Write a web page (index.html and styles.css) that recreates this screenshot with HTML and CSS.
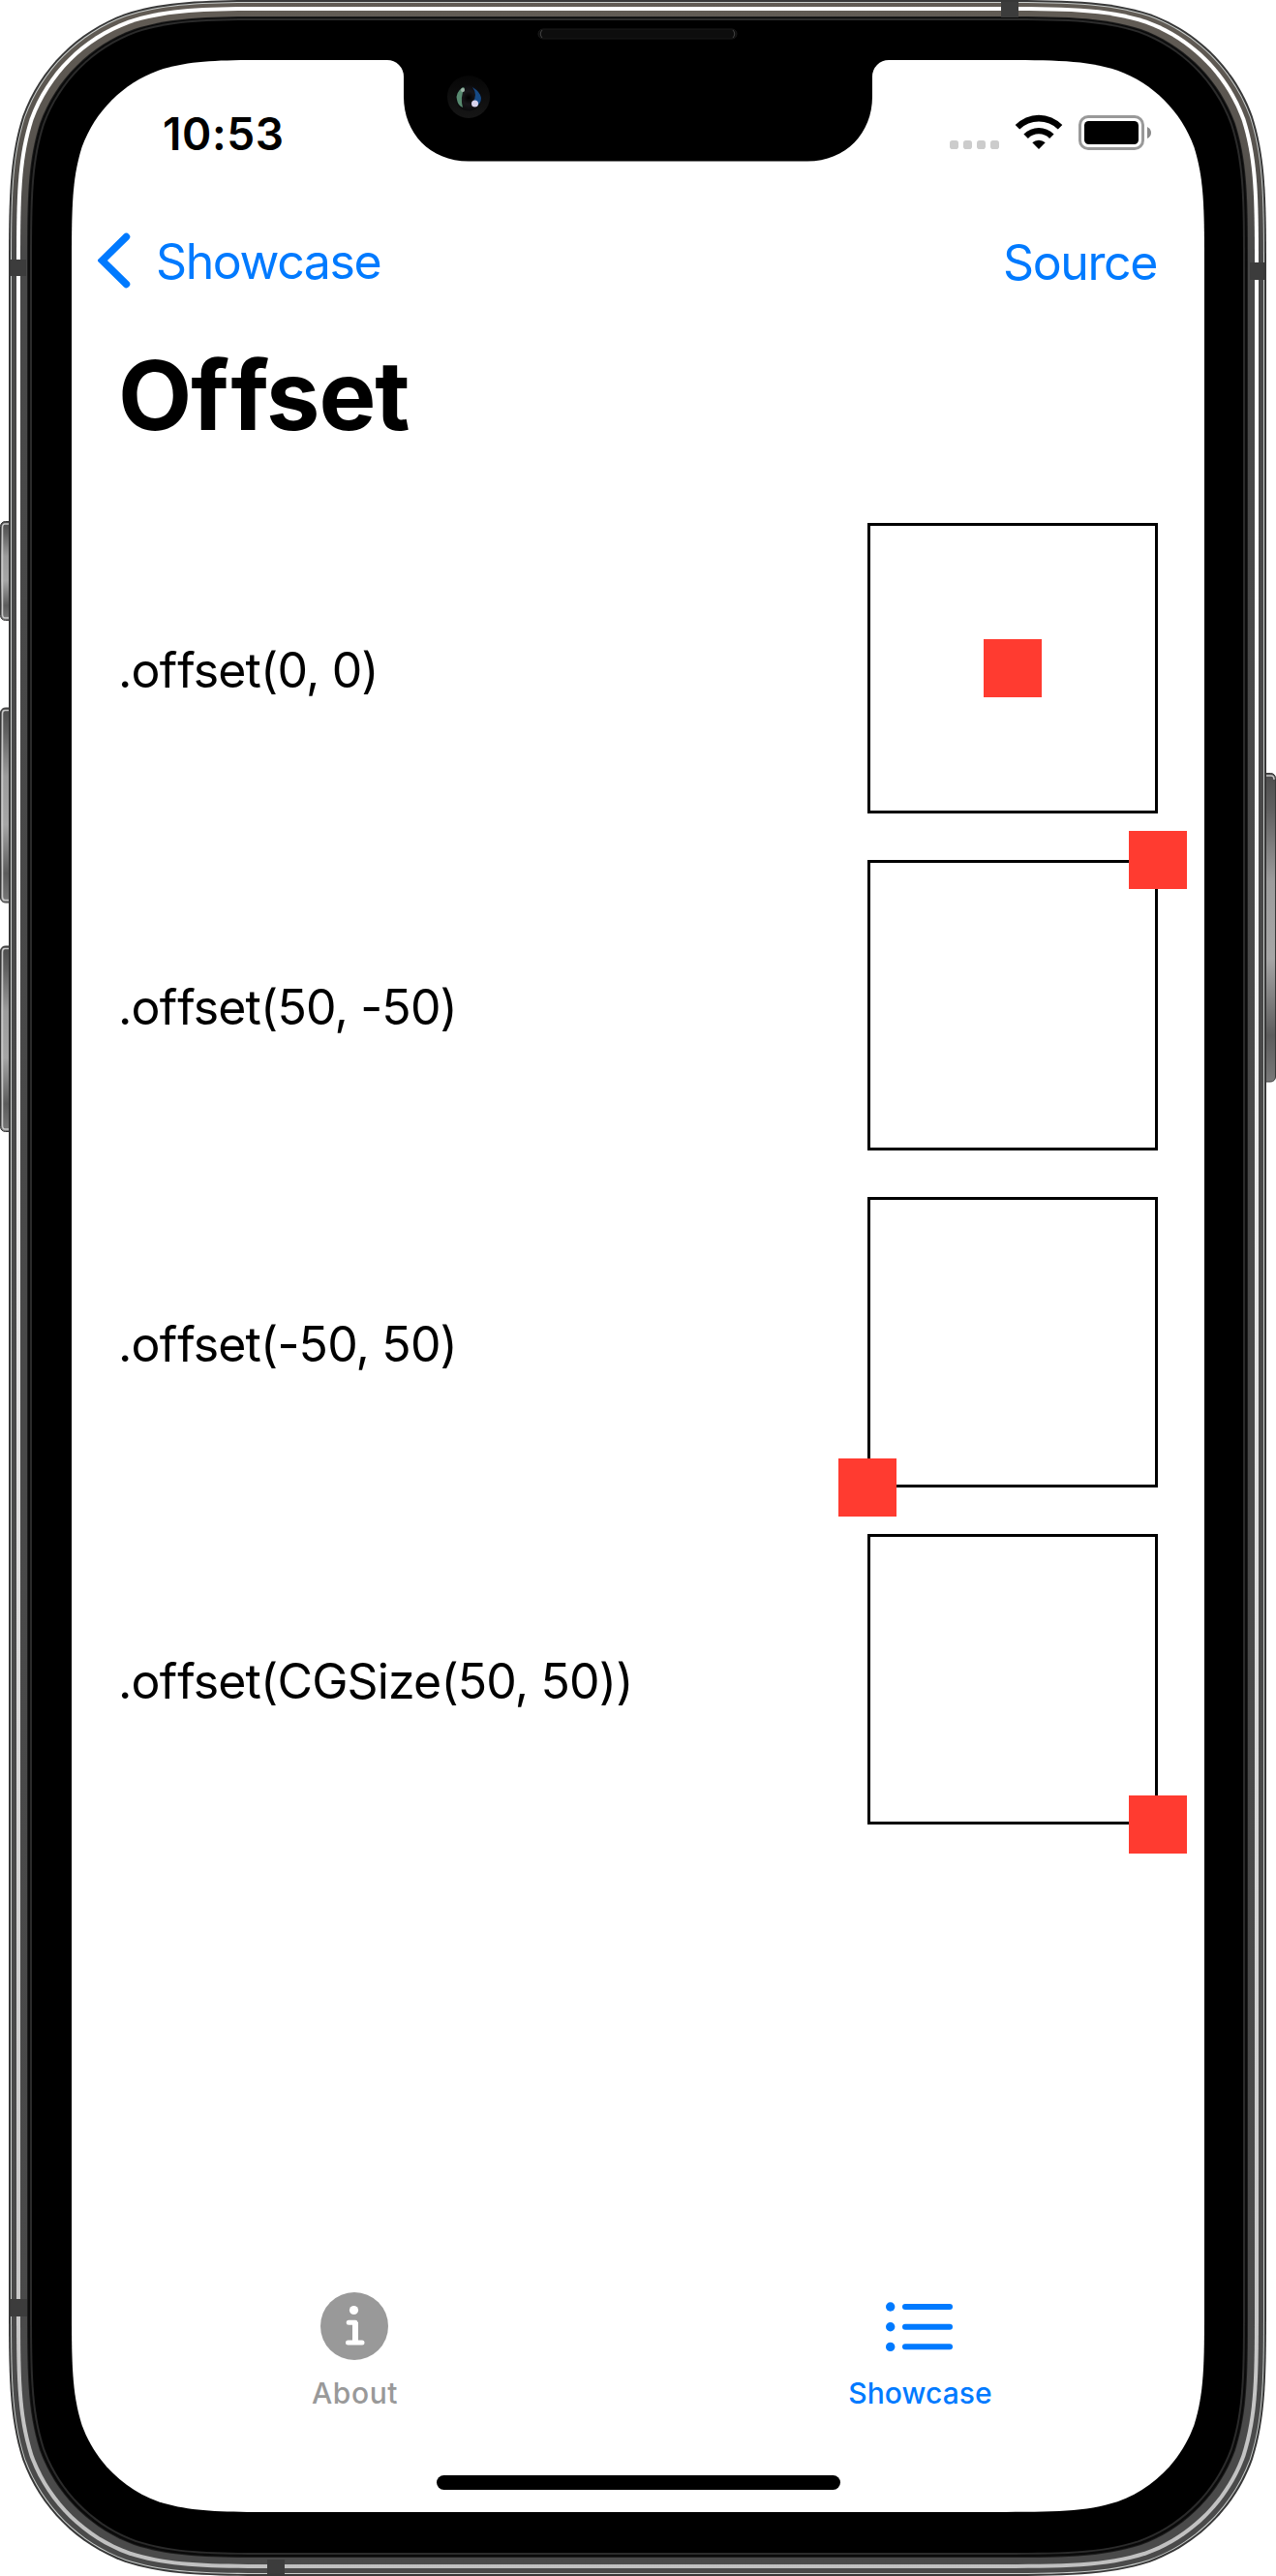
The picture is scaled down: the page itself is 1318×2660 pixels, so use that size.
FILE: index.html
```html
<!DOCTYPE html>
<html lang="en">
<head>
<meta charset="utf-8">
<title>Offset</title>
<link rel="stylesheet" href="styles.css">
</head>
<body>
<div class="device">
  <svg class="frame" viewBox="0 0 1318 2660" aria-hidden="true">
    <defs>
      <linearGradient id="metal" gradientUnits="userSpaceOnUse" x1="0" y1="0" x2="0" y2="2660">
        <stop offset="0" stop-color="#625c55"/><stop offset=".06" stop-color="#57534e"/><stop offset=".1" stop-color="#484848"/><stop offset="1" stop-color="#4a4a4a"/>
      </linearGradient>
      <linearGradient id="shine" gradientUnits="userSpaceOnUse" x1="0" y1="0" x2="0" y2="2660">
        <stop offset="0" stop-color="#fff"/><stop offset=".2" stop-color="#fff"/><stop offset=".5" stop-color="#e6e6e6"/><stop offset="1" stop-color="#c0c0c0"/>
      </linearGradient>
      <linearGradient id="key" x1="0" y1="0" x2="0" y2="1">
        <stop offset="0" stop-color="#4c4c4c"/><stop offset=".12" stop-color="#606060"/><stop offset=".35" stop-color="#9c9c9c"/><stop offset=".6" stop-color="#a6a6a6"/><stop offset=".85" stop-color="#5c5c5c"/><stop offset="1" stop-color="#787878"/>
      </linearGradient>
      <radialGradient id="lens"><stop offset="0" stop-color="#000"/><stop offset=".5" stop-color="#17151a"/><stop offset="1" stop-color="#0a0a0c"/></radialGradient>
      <linearGradient id="well" x1="0" y1="0" x2="0" y2="1"><stop offset="0" stop-color="#060606"/><stop offset="1" stop-color="#161616"/></linearGradient>
    </defs>
    <g class="keys">
      <rect x=".5" y="538.5" width="16" height="102" rx="5"/>
      <rect x=".5" y="731" width="16" height="201" rx="5"/>
      <rect x=".5" y="977" width="16" height="191.500" rx="5"/>
      <rect x="1300" y="798.5" width="17.5" height="318.5" rx="5"/>
    </g>
    <path class="key-edge" d="M9 541H5Q2.500 541 2.500 545V634Q2.500 638 5 638H9M9 733.500H5Q2.500 733.500 2.500 737V926Q2.500 929.500 5 929.500H9M9 979.500H5Q2.500 979.500 2.500 983V1162Q2.500 1166 5 1166H9M1308 801H1313Q1316 801 1316 805"/>
    <g id="rings"></g>
    <g class="antenna">
      <rect x="11" y="268" width="16" height="17"/>
      <rect x="1291" y="271" width="15" height="18"/>
      <rect x="1034" y="2" width="18" height="16"/>
      <rect x="11" y="2374" width="17" height="18"/>
      <rect x="276" y="2643" width="18" height="15"/>
    </g>
    <path id="glass" fill="#fff"/>
    <path d="M400 61V62A17 17 0 0 1 417 79V100C417 137 444 166.500 484 166.500H834C874 166.500 901 137 901 100V79A17 17 0 0 1 918 62V61Z"/>
    <rect x="556" y="30" width="205" height="10" rx="5" fill="#0d0d0d" stroke="#1b1b1b"/>
    <path d="M560 31Q556.500 35 560 39M757 31Q760.500 35 757 39" fill="none" stroke="#444"/>
    <circle cx="484" cy="100" r="22" fill="url(#well)"/>
    <circle cx="484" cy="101" r="13.500" fill="url(#lens)"/>
    <path d="M478 90Q470 96 472 103Q473 109 478 111Q475 100 480 91Z" fill="#588a70"/>
    <path d="M488 90Q496 95 497 101Q497 107 492 110L488 106Q494 98 488 90Z" fill="#164a86"/>
    <circle cx="478" cy="93" r="2" fill="#9db5a8"/>
    <circle cx="490.500" cy="107" r="3.500" fill="#d8d3ec"/>
  </svg>

  <main class="screen">
    <header class="status">
      <time class="clock">10:53</time>
      <svg class="indicators" width="210" height="38" viewBox="0 0 210 38" aria-hidden="true">
        <g fill="#ccc"><rect x="0" y="27" width="9" height="9" rx="2.800"/><rect x="14" y="27" width="9" height="9" rx="2.800"/><rect x="28" y="27" width="9" height="9" rx="2.800"/><rect x="42" y="27" width="9" height="9" rx="2.800"/></g>
        <path d="M92 36L85.300 29.300A10.200 10.200 0 0 1 98.700 29.300Z"/>
        <path d="M76.400 20.400L80.900 24.900A15.700 15.700 0 0 1 103.100 24.900L107.600 20.400A22.500 22.500 0 0 0 76.400 20.400Z"/>
        <path d="M67.700 11.100L72.200 15.600A28.200 28.200 0 0 1 111.800 15.600L116.300 11.100A33.500 33.500 0 0 0 67.700 11.100Z"/>
        <rect x="134.500" y="2.500" width="65" height="33" rx="8.500" fill="none" stroke="#999" stroke-width="3"/>
        <rect x="139" y="7" width="56" height="24" rx="4.500"/>
        <path d="M204 13Q208 15 208 19T204 25Z" fill="#8a8a8a"/>
      </svg>
    </header>

    <nav class="navbar">
      <a class="back">
        <svg width="34" height="58" viewBox="0 0 34 58" aria-hidden="true"><path d="M29.500 4.500L4.500 29L29.500 53.500" fill="none" stroke="#007aff" stroke-width="7.500" stroke-linecap="round" stroke-linejoin="miter"/></svg>
        <span>Showcase</span>
      </a>
      <a class="source">Source</a>
    </nav>

    <h1 class="title">O<b>f</b>fset</h1>

    <section class="samples">
      <div class="sample"><span>.o<b>f</b>fset(0, 0)</span><div class="box"><i class="dot"></i></div></div>
      <div class="sample"><span>.o<b>f</b>fset(50, -50)</span><div class="box"><i class="dot up-right"></i></div></div>
      <div class="sample"><span>.o<b>f</b>fset(-50, 50)</span><div class="box"><i class="dot down-left"></i></div></div>
      <div class="sample"><span>.o<b>f</b>fset(CGSize(50, 50))</span><div class="box"><i class="dot down-right"></i></div></div>
    </section>

    <footer class="tabs">
      <a class="tab">
        <svg width="70" height="70" viewBox="0 0 70 70" aria-hidden="true"><circle cx="35" cy="35" r="35" fill="#999"/><circle cx="34.500" cy="18.500" r="4.600" fill="#fff"/><path d="M29.200 31.200H36V52M28.500 52H43" fill="none" stroke="#fff" stroke-width="5" stroke-linecap="round" stroke-linejoin="round"/><path d="M36 31V52" fill="none" stroke="#fff" stroke-width="6"/></svg>
        <span>About</span>
      </a>
      <a class="tab active">
        <svg width="70" height="70" viewBox="0 0 70 70" aria-hidden="true"><g fill="#007aff"><circle cx="4.700" cy="15" r="4.700"/><circle cx="4.700" cy="35.700" r="4.700"/><circle cx="4.700" cy="56.400" r="4.700"/><rect x="17" y="12" width="52" height="6" rx="3"/><rect x="17" y="32.700" width="52" height="6" rx="3"/><rect x="17" y="53.300" width="52" height="6" rx="3"/></g></svg>
        <span>Showcase</span>
      </a>
    </footer>
    <div class="home"></div>
  </main>
</div>
<script src="frame.js"></script>
</body>
</html>
```
FILE: styles.css
```css
* { box-sizing: border-box; }
body { margin: 0; background: #fff; font-family: Inter, "Liberation Sans", sans-serif; font-variant-ligatures: none; color: #000; }
.device { position: relative; width: 1318px; height: 2660px; padding: 62px 74px 66px; overflow: hidden; }
.frame { position: absolute; left: 0; top: 0; width: 1318px; height: 2660px; }
.keys rect { fill: url(#key); stroke: #383838; stroke-width: 1; }
.key-edge { fill: none; stroke: #c8c8c8; stroke-width: 1.5; }
.antenna rect { fill: #3c3c3c; }
.screen { position: relative; display: flex; flex-direction: column; width: 1170px; height: 2532px; }
.status { display: flex; justify-content: space-between; align-items: flex-start; height: 141px; padding: 48px 53px 0 94px; }
.clock { font-size: 46px; font-weight: 600; line-height: 56px; letter-spacing: .6px; }
.indicators { margin: 8px 0 0; flex: none; }
.navbar { display: flex; justify-content: space-between; align-items: center; height: 132px; padding: 0 49px 0 27px; font-size: 50px; line-height: 62px; color: #007aff; }
.back { display: flex; align-items: center; gap: 26px; }
.back span { letter-spacing: -1.4px; padding-top: 2px; }
.source { letter-spacing: -1.4px; padding-top: 4px; }
.title { margin: 0; height: 144px; padding: 1px 0 0 48px; font-size: 99px; font-weight: 700; line-height: 144px; letter-spacing: -1.1px; }
.title b { font-weight: inherit; letter-spacing: 2px; }
.samples { display: flex; flex-direction: column; gap: 48px; margin-top: 61px; padding: 0 48px; font-size: 50px; }
.sample { display: flex; justify-content: space-between; align-items: center; }
.sample span { letter-spacing: -.85px; padding-top: 3px; }
.sample b { font-weight: 400; letter-spacing: 0; }
.box { display: flex; align-items: center; justify-content: center; width: 300px; height: 300px; border: 3px solid #000; }
.dot { width: 60px; height: 60px; background: #ff3b30; }
.up-right { transform: translate(150px, -150px); }
.down-left { transform: translate(-150px, 150px); }
.down-right { transform: translate(150px, 150px); }
.tabs { display: flex; margin-top: auto; height: 189px; }
.tab { flex: 1; display: flex; flex-direction: column; align-items: center; gap: 16px; font-size: 30px; font-weight: 500; line-height: 36px; color: #999; }
.tab svg { margin-right: 2px; }
.tab span { letter-spacing: .6px; }
.active { color: #007aff; }
.active svg { margin-right: 3px; }
.active span { letter-spacing: .1px; margin-right: 2px; }
.home { align-self: center; width: 417px; height: 15px; margin-bottom: 23px; border-radius: 8px; background: #000; }
```
FILE: frame.js
```js
// Rounded rectangle with continuous-curvature corners.
function squircle(l, t, r, b, c) {
  const k = [1.528665, 1.088493, 0.868407, 0.631494, 0.372824, 0.16906, 0.074911].map(v => v * c);
  const corner = (x, y, sx, sy, vertical) => {
    const p = (u, v) => vertical ? `${x + sx * v} ${y + sy * u}` : `${x + sx * u} ${y + sy * v}`;
    return `L${p(k[0], 0)}C${p(k[1], 0)} ${p(k[2], 0)} ${p(k[3], k[6])}` +
      `C${p(k[4], k[5])} ${p(k[5], k[4])} ${p(k[6], k[3])}` +
      `C${p(0, k[2])} ${p(0, k[1])} ${p(0, k[0])}`;
  };
  return ('M' + corner(l, t, 1, 1, true).slice(1)) + corner(r, t, -1, 1, false) +
    corner(r, b, -1, -1, true) + corner(l, b, 1, -1, false) + 'Z';
}

// Metal bands from the outside in: side inset, top inset, corner size, fill.
const bands = [
  [0, 0, 190, '#383838'],
  [2, 2, 188, '#c9cdcb'],
  [3, 3, 187, 'url(#metal)'],
  [8, 7, 183, 'url(#shine)'],
  [12, 11, 179, 'url(#metal)'],
  [19, 17, 175, '#1c1c1c'],
  [20, 18, 174, '#0a0a0a'],
  [22, 19, 173, '#2b2b2b'],
  [24, 21, 171, '#000']
];
const rings = document.getElementById('rings');
for (const [s, t, c, fill] of bands) {
  const path = document.createElementNS('http://www.w3.org/2000/svg', 'path');
  path.setAttribute('d', squircle(9 + s, t, 1308 - s, 2660 - s, c));
  path.setAttribute('fill', fill);
  rings.appendChild(path);
}
document.getElementById('glass').setAttribute('d', squircle(74, 62, 1244, 2594, 142));
```
